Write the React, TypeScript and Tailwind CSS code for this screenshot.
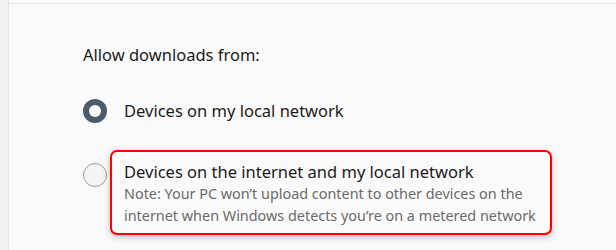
import React from "react";

export default function App() {
  return (
    <div className="w-[616px] h-[250px] flex bg-[#f3f3f3] overflow-hidden" style={{ fontFamily: '"Noto Sans", "Open Sans", sans-serif' }}>
      <div className="w-[9px] shrink-0 border-r border-[#e3e3e3] bg-[#f3f3f3]" />
      <div className="flex-1 flex flex-col bg-[#fafafa]">
        <div className="h-[4px] border-b border-[#e3e3e3] bg-[#fbfbfb]" />
        <div className="pl-[74px] pt-[39px]">
          <div className="text-[16.5px] leading-[24px] text-[#1b1b1b]">Allow downloads from:</div>
          <div className="mt-[32px] flex items-center">
            <div className="w-[24px] h-[24px] rounded-full bg-[#4a5b6a] flex items-center justify-center shrink-0">
              <div className="w-[12px] h-[12px] rounded-full bg-white" />
            </div>
            <div className="ml-[17px] text-[16.5px] leading-[24px] text-[#1b1b1b]">Devices on my local network</div>
          </div>
          <div className="mt-[27px] flex items-start">
            <div className="mt-[13px] w-[24px] h-[24px] rounded-full border-[1.5px] border-[#9a9a9a] bg-[#f4f4f4] shrink-0" />
            <div className="ml-[3px] border-2 border-[#ff0000] rounded-[7px] pl-[12px] pr-[14px] pt-[9px] pb-[7px] shadow-[0_2px_6px_rgba(0,0,0,0.25)] bg-[#fafafa]">
              <div className="text-[16.5px] leading-[22px] text-[#1b1b1b]">Devices on the internet and my local network</div>
              <div className="text-[14.4px] leading-[21.5px] text-[#6a6a6a]">
                Note: Your PC won’t upload content to other devices on the
                <br />
                internet when Windows detects you’re on a metered network
              </div>
            </div>
          </div>
        </div>
      </div>
    </div>
  );
}
